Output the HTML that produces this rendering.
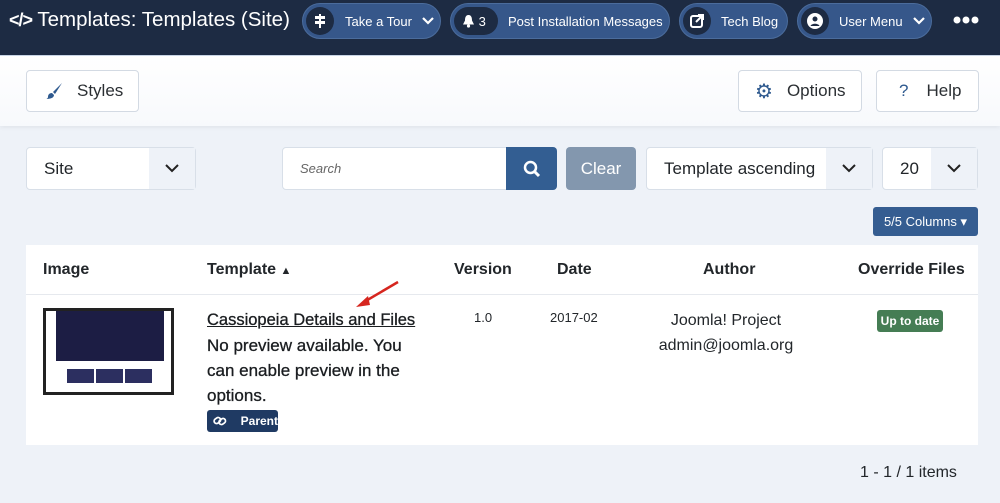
<!DOCTYPE html>
<html><head><style>
*{box-sizing:border-box;margin:0;padding:0}
body{width:1000px;height:503px;overflow:hidden;background:#eef2f8;font-family:"Liberation Sans",sans-serif;color:#22262a;position:relative}
.a{position:absolute}
.hdr{left:0;top:0;width:1000px;height:56px;background:#1d2b43;border-bottom:1px solid #c9d5e6}
.pill{position:absolute;top:3px;height:36px;border-radius:18px;background:#36578a;color:#fff;font-size:13px;display:flex;align-items:center;border:1px solid #4b6c9c;white-space:nowrap}
.ic{width:28px;height:28px;border-radius:50%;background:#1d2b43;margin-left:3px;display:flex;align-items:center;justify-content:center;color:#fff;font-size:13px}
.tb{left:0;top:56px;width:1000px;height:70px;background:linear-gradient(#fff,#f7f9fc);box-shadow:0 2px 4px rgba(0,0,0,.05)}
.btn{position:absolute;background:#fff;border:1px solid #d3dae3;border-radius:4px;display:flex;align-items:center;font-size:17px;color:#2b2f33}
.sel{position:absolute;background:#fff;border:1px solid #d8dfe8;border-radius:4px;font-size:17px;display:flex;align-items:center}
.sel .ar{position:absolute;right:0;top:0;bottom:0;width:46px;background:#eef2f8;display:flex;align-items:center;justify-content:center}
</style></head><body>
<div class="a hdr">
 <div class="a" style="left:9px;top:8px;color:#fff;font-size:20.5px;white-space:nowrap"><b style="font-size:18px;letter-spacing:-1px">&lt;/&gt;</b> Templates: Templates (Site)</div>
 <div class="pill" style="left:302px;width:139px"><div class="ic"><svg width="14" height="14" viewBox="0 0 14 14"><rect x="2" y="2" width="10" height="3" fill="#fff"/><rect x="2" y="7" width="10" height="3" fill="#fff"/><rect x="6" y="0" width="2" height="14" fill="#fff"/></svg></div><span style="margin-left:11px">Take a Tour</span><svg style="margin-left:10px" width="12" height="8" viewBox="0 0 12 8"><path d="M1 1l5 5 5-5" stroke="#fff" stroke-width="2.2" fill="none"/></svg></div>
 <div class="pill" style="left:450px;width:220px"><div class="ic" style="width:44px;border-radius:14px;justify-content:flex-start;padding-left:8px"><svg width="13" height="14" viewBox="0 0 13 14"><path d="M6.5 1C3.5 1 3 4 3 6.5L1 10.5h11L10 6.5C10 4 9.5 1 6.5 1z" fill="#fff"/><circle cx="6.5" cy="12" r="1.6" fill="#fff"/></svg>&nbsp;3</div><span style="margin-left:10px">Post Installation Messages</span></div>
 <div class="pill" style="left:679px;width:109px"><div class="ic"><svg width="14" height="14" viewBox="0 0 14 14"><rect x="1" y="2" width="11" height="11" rx="2" fill="none" stroke="#fff" stroke-width="2"/><path d="M6 8L13 1M8 1h5v5" stroke="#fff" stroke-width="2" fill="none"/></svg></div><span style="margin-left:10px">Tech Blog</span></div>
 <div class="pill" style="left:797px;width:135px"><div class="ic"><svg width="16" height="16" viewBox="0 0 16 16"><circle cx="8" cy="8" r="8" fill="#fff"/><circle cx="8" cy="6" r="2.5" fill="#1d2b43"/><path d="M3.5 13c1-3 8-3 9 0" fill="#1d2b43"/></svg></div><span style="margin-left:10px">User Menu</span><svg style="margin-left:10px" width="12" height="8" viewBox="0 0 12 8"><path d="M1 1l5 5 5-5" stroke="#fff" stroke-width="2.2" fill="none"/></svg></div>
 <svg class="a" style="left:953px;top:16px" width="26" height="8" viewBox="0 0 26 8"><circle cx="4" cy="4" r="3.5" fill="#fff"/><circle cx="13" cy="4" r="3.5" fill="#fff"/><circle cx="22" cy="4" r="3.5" fill="#fff"/></svg>
</div>
<div class="a tb"></div>
<div class="btn" style="left:26px;top:70px;width:113px;height:42px"><svg style="margin-left:18px" width="18" height="18" viewBox="0 0 18 18"><path d="M17 1L8 10l2 2z" fill="#2f5a8f"/><path d="M7 11c-3 0-4 2-4 4 0 1-1 2-2 2 4 0 8-1 8-4z" fill="#2f5a8f"/></svg><span style="margin-left:14px">Styles</span></div>
<div class="btn" style="left:738px;top:70px;width:124px;height:42px"><span style="color:#2f5a8f;margin-left:16px;font-size:20px">&#9881;</span><span style="margin-left:14px">Options</span></div>
<div class="btn" style="left:876px;top:70px;width:103px;height:42px"><span style="color:#2f5a8f;margin-left:22px">?</span><span style="margin-left:18px">Help</span></div>

<div class="sel" style="left:26px;top:147px;width:170px;height:43px"><span style="margin-left:17px">Site</span><div class="ar"><svg width="14" height="9" viewBox="0 0 14 9"><path d="M1 1l6 6 6-6" stroke="#222" stroke-width="2" fill="none"/></svg></div></div>
<div class="sel" style="left:282px;top:147px;width:225px;height:43px;border-radius:4px 0 0 4px"><span style="margin-left:17px;font-size:13px;font-style:italic;color:#666">Search</span></div>
<div class="a" style="left:506px;top:147px;width:51px;height:43px;background:#335e92;border-radius:0 4px 4px 0;display:flex;align-items:center;justify-content:center"><svg width="18" height="18" viewBox="0 0 18 18"><circle cx="7.5" cy="7.5" r="5.5" stroke="#fff" stroke-width="2.5" fill="none"/><path d="M11.5 11.5L16 16" stroke="#fff" stroke-width="3"/></svg></div>
<div class="a" style="left:566px;top:147px;width:70px;height:43px;background:#8397ae;border-radius:4px;color:#fff;font-size:17px;display:flex;align-items:center;justify-content:center">Clear</div>
<div class="sel" style="left:646px;top:147px;width:227px;height:43px"><span style="margin-left:17px">Template ascending</span><div class="ar"><svg width="14" height="9" viewBox="0 0 14 9"><path d="M1 1l6 6 6-6" stroke="#222" stroke-width="2" fill="none"/></svg></div></div>
<div class="sel" style="left:882px;top:147px;width:96px;height:43px"><span style="margin-left:17px">20</span><div class="ar"><svg width="14" height="9" viewBox="0 0 14 9"><path d="M1 1l6 6 6-6" stroke="#222" stroke-width="2" fill="none"/></svg></div></div>
<div class="a" style="left:873px;top:207px;width:105px;height:29px;background:#355d91;border-radius:3px;color:#fff;font-size:13px;display:flex;align-items:center;justify-content:center">5/5 Columns &#9662;</div>

<div class="a" style="left:26px;top:245px;width:952px;height:200px;background:#fff">
 <div class="a" style="left:0;top:49px;width:952px;height:1px;background:#e6e9ee"></div>
 <div class="a" style="left:17px;top:16px;font-weight:bold;font-size:16px">Image</div>
 <div class="a" style="left:181px;top:16px;font-weight:bold;font-size:16px">Template <span style="font-size:11px">&#9650;</span></div>
 <div class="a" style="left:428px;top:16px;font-weight:bold;font-size:16px">Version</div>
 <div class="a" style="left:531px;top:16px;font-weight:bold;font-size:16px">Date</div>
 <div class="a" style="left:677px;top:16px;font-weight:bold;font-size:16px">Author</div>
 <div class="a" style="left:832px;top:16px;font-weight:bold;font-size:16px">Override Files</div>
 <div class="a" style="left:17px;top:63px;width:131px;height:87px;border:3px solid #222;background:#fff">
  <div class="a" style="left:10px;top:0;width:108px;height:50px;background:#1c1d44"></div>
  <div class="a" style="left:21px;top:58px;width:27px;height:14px;background:#2c2f60"></div>
  <div class="a" style="left:50px;top:58px;width:27px;height:14px;background:#2c2f60"></div>
  <div class="a" style="left:79px;top:58px;width:27px;height:14px;background:#2c2f60"></div>
 </div>
 <div class="a" style="left:181px;top:62px;font-size:17px;line-height:25px;width:205px;color:#1a1d20;-webkit-text-stroke:0.3px #1a1d20"><span style="text-decoration:underline;white-space:nowrap;font-size:16.5px">Cassiopeia Details and Files</span><br>No preview available. You can enable preview in the options.</div>
 <div class="a" style="left:181px;top:165px;width:71px;height:22px;background:#1f3a63;border-radius:3px;color:#fff;font-size:12px;font-weight:bold;display:flex;align-items:center"><svg style="margin-left:6px;margin-right:14px" width="14" height="12" viewBox="0 0 14 12"><rect x="1" y="3" width="7" height="5" rx="2.5" transform="rotate(-35 4.5 5.5)" stroke="#fff" stroke-width="1.8" fill="none"/><rect x="6" y="4" width="7" height="5" rx="2.5" transform="rotate(-35 9.5 6.5)" stroke="#fff" stroke-width="1.8" fill="none"/></svg>Parent</div>
 <div class="a" style="left:448px;top:65px;font-size:13px">1.0</div>
 <div class="a" style="left:524px;top:65px;font-size:13px">2017-02</div>
 <div class="a" style="left:600px;top:63px;width:200px;text-align:center;font-size:16px;line-height:25px">Joomla! Project<br>admin@joomla.org</div>
 <div class="a" style="left:851px;top:65px;width:66px;height:22px;background:#457d54;border-radius:3px;color:#fff;font-size:12px;font-weight:bold;display:flex;align-items:center;justify-content:center">Up to date</div>
</div>
<svg class="a" style="left:350px;top:280px" width="52" height="30" viewBox="0 0 52 30"><path d="M48 2L14 22" stroke="#d6261f" stroke-width="2.5"/><path d="M6 27L18 16L20 25Z" fill="#d6261f"/></svg>
<div class="a" style="left:860px;top:464px;font-size:16px">1 - 1 / 1 items</div>
</body></html>
